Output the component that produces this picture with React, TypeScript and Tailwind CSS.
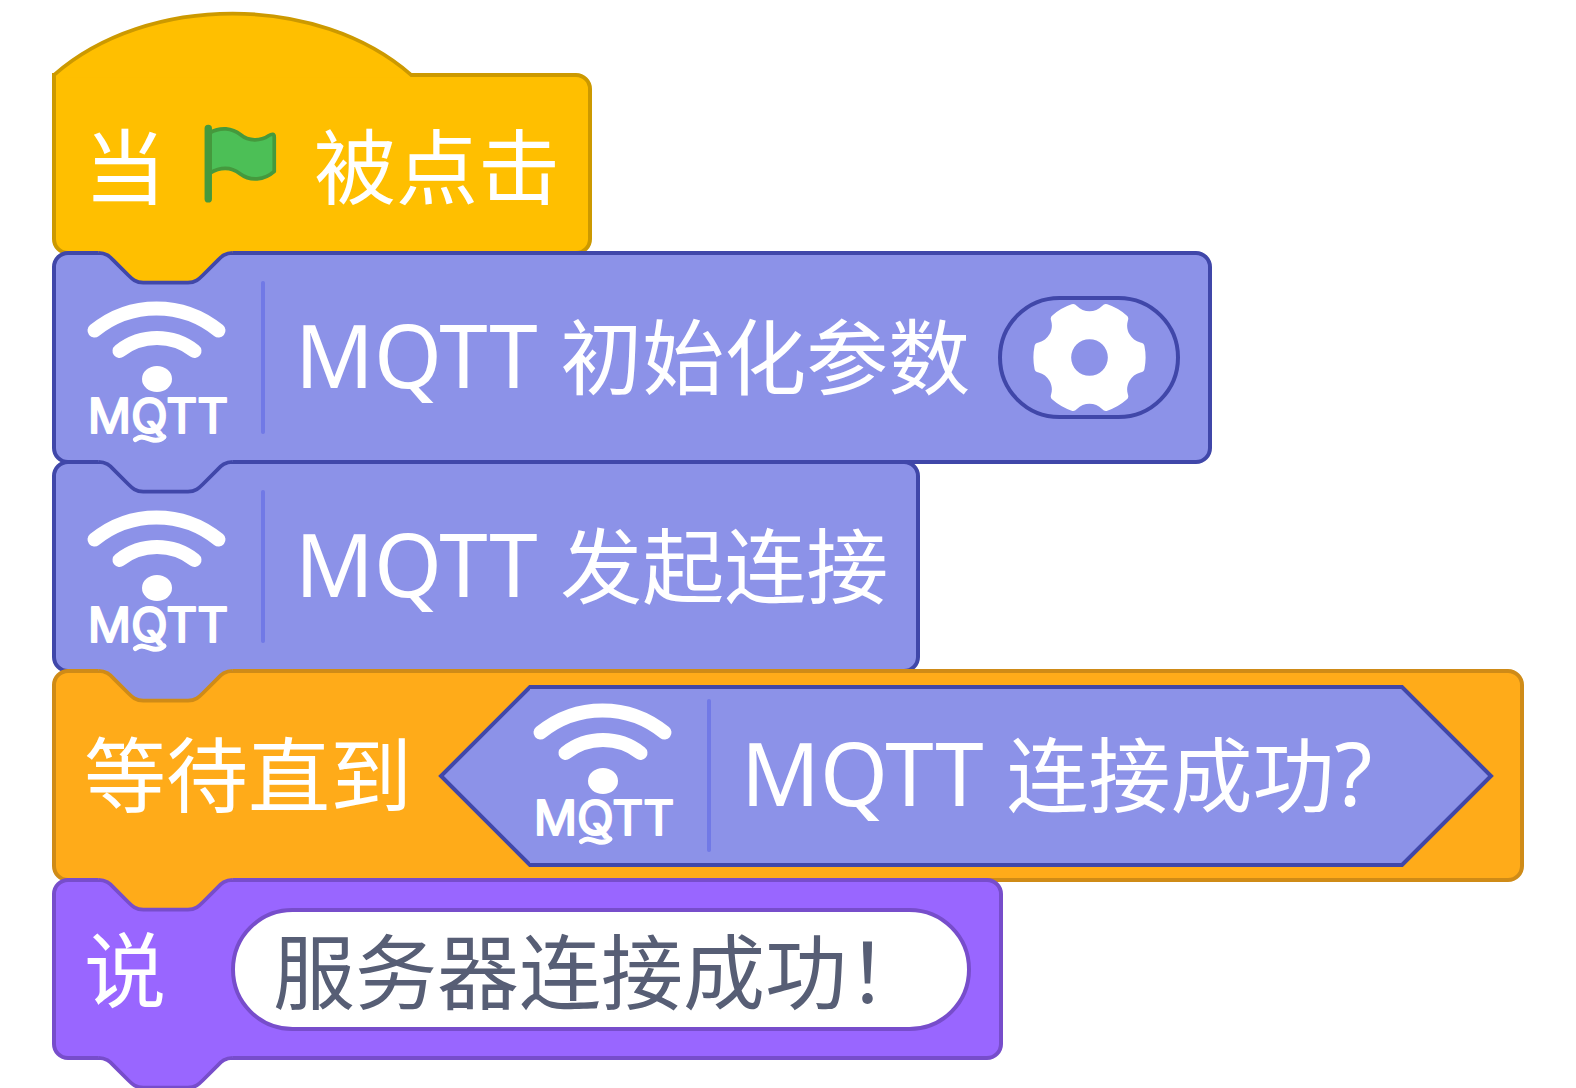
import type { ReactNode } from "react";

const NOTCH = "M12 0c2 0 3 1 4 2l4 4c1 1 2 2 4 2h12c2 0 3-1 4-2l4-4c1-1 2-2 4-2";

/* The connector between two stacked blocks. */
function Notch({ className }: { className: string }) {
  return (
    <svg viewBox="-0.5 -0.5 58 14.5" className={"absolute -left-1 h-[54px] w-[216px] " + className} aria-hidden="true">
      <path d={NOTCH + "V-0.5H12z"} stroke="none" />
      <path d={NOTCH} fill="none" />
    </svg>
  );
}

function Block({ className, children }: { className: string; children: ReactNode }) {
  return (
    <section className={"relative -mt-1 flex items-center rounded-[16px] border-4 px-7 " + className}>
      {children}
    </section>
  );
}

function Label({ className = "", children }: { className?: string; children: ReactNode }) {
  return <span className={"whitespace-pre text-[82px] leading-[88px] " + className}>{children}</span>;
}

function Latin({ children }: { children: ReactNode }) {
  return <span className="text-[87px] leading-[88px]">{children}</span>;
}

function MqttIcon({ className = "" }: { className?: string }) {
  return (
    <svg
      viewBox="0 0 149 150"
      className={"h-[150px] w-[149px] shrink-0 overflow-visible fill-white stroke-white " + className}
    >
      <g fill="none" strokeWidth="14" strokeLinecap="round">
        <path d="M10.500 31.5A98 98 0 0 1 134.500 31.5" />
        <path d="M35.500 52A61 61 0 0 1 110.500 52" />
        <path d="M51.500 140.500C58 136 62 139 67 140.500S77 141 80 138" strokeWidth="5" />
      </g>
      <ellipse cx="73" cy="80" rx="15" ry="13" stroke="none" />
      <text
        x="74"
        y="134"
        textAnchor="middle"
        strokeWidth="2"
        strokeLinejoin="round"
        fontFamily="Inter, sans-serif"
        fontSize="48"
      >
        MQTT
      </text>
    </svg>
  );
}

function Separator() {
  return <span className="mr-0.5 h-[153px] w-1 shrink-0 rounded-full bg-[#7179e6]" />;
}

function FlagIcon() {
  return (
    <svg viewBox="16 28 268 268" className="size-[90px] shrink-0" role="img" aria-label="绿旗">
      <path
        d="M60 69C92 51 126 54 152 75C176 95 211 94 235 78Q252 67 252 82V184C222 211 180 214 150 191C122 169 94 169 60 189z"
        fill="#4cbf56"
        stroke="#45993d"
        strokeWidth="11"
        strokeLinejoin="round"
      />
      <path d="M55.500 56V266" stroke="#45993d" strokeWidth="22" strokeLinecap="round" />
    </svg>
  );
}

/* One notch of the gear, followed by the outer edge of the next tooth; repeated every 60 degrees. */
const GEAR_POINTS = [
  [-46, -165], [-38, -156], [-28, -145], [-14, -140], [0, -140],
  [14, -140], [28, -145], [38, -156], [46, -165], [54, -161],
];

function gearPath() {
  let d = "";
  for (let k = 0; k < 6; k++) {
    const a = (k * Math.PI) / 3;
    const turn = (x: number, y: number) =>
      (x * Math.cos(a) - y * Math.sin(a)).toFixed(1) + " " + (x * Math.sin(a) + y * Math.cos(a)).toFixed(1);
    const p = GEAR_POINTS.map(([x, y]) => turn(x, y));
    const start = turn(-54, -161);
    d += k === 0 ? `M${start}` : `A169 169 0 0 1 ${start}`;
    d += `Q${p[0]} ${p[1]}C${p[2]} ${p[3]} ${p[4]}C${p[5]} ${p[6]} ${p[7]}Q${p[8]} ${p[9]}`;
  }
  return d + "A169 169 0 0 1 -54 -161zM-55.500 0a55.500 55.500 0 1 0 111 0a55.500 55.500 0 1 0 -111 0z";
}

function GearButton() {
  return (
    <button
      type="button"
      aria-label="设置"
      className="flex h-[123px] w-[182px] shrink-0 items-center justify-center rounded-full border-4 border-[#4047a9]"
    >
      <svg viewBox="-171 -171 342 342" className="size-[113px]">
        <path d={gearPath()} fill="#fff" fillRule="evenodd" />
      </svg>
    </button>
  );
}

/* The pointed end of a true/false block; the right end is the mirrored left one. */
function Point({ className = "" }: { className?: string }) {
  return (
    <svg
      viewBox="0 0 90 182"
      className={"h-[182px] w-[90px] shrink-0 overflow-visible fill-[#8c92e8] stroke-[#4047a9] " + className}
      aria-hidden="true"
    >
      <path d="M91 2H90L1 91L90 180H91" strokeWidth="4" />
    </svg>
  );
}

function Condition({ children }: { children: ReactNode }) {
  return (
    <div className="flex h-[182px]">
      <Point />
      <div className="flex items-center gap-7 border-y-4 border-[#4047a9] bg-[#8c92e8] pr-[30px]">{children}</div>
      <Point className="-scale-x-100" />
    </div>
  );
}

export default function App() {
  return (
    <main className="flex min-h-screen flex-col items-start overflow-hidden bg-white pl-[52px] pt-[77px] font-['Noto_Sans','Noto_Sans_CJK_SC',sans-serif] text-white">
      <Block className="min-h-[182px] gap-[29px] rounded-tl-none border-[#cc9900] bg-[#ffbf00]">
        <svg
          viewBox="-0.5 -18 116 29"
          className="absolute -left-1 -top-[69px] h-[108px] w-[432px]"
          aria-hidden="true"
        >
          <path d="M0 0c25-22 71-22 96 0V.7H.5V0z" fill="#ffbf00" />
          <path d="M0 1V0c25-22 71-22 96 0h2" fill="none" stroke="#cc9900" />
        </svg>
        <Label className="pt-1">当</Label>
        <FlagIcon />
        <Label className="pt-1">被点击</Label>
      </Block>

      <Block className="min-h-[213px] gap-7 border-[#4047a9] bg-[#8c92e8]">
        <Notch className="-top-1 fill-[#ffbf00] stroke-[#4047a9]" />
        <MqttIcon className="mt-8" />
        <Separator />
        <Label className="pb-1.5">
          <Latin>MQTT </Latin>初始化参数
        </Label>
        <GearButton />
      </Block>

      <Block className="min-h-[213px] gap-7 border-[#4047a9] bg-[#8c92e8]">
        <Notch className="-top-1 fill-[#8c92e8] stroke-[#4047a9]" />
        <MqttIcon className="mt-8" />
        <Separator />
        <Label className="pb-1.5">
          <Latin>MQTT </Latin>发起连接
        </Label>
      </Block>

      <Block className="min-h-[213px] gap-7 border-[#cf8b17] bg-[#ffab19]">
        <Notch className="-top-1 fill-[#8c92e8] stroke-[#cf8b17]" />
        <Label className="pb-1">等待直到</Label>
        <Condition>
          <MqttIcon />
          <Separator />
          <Label className="pb-1.5">
            <Latin>MQTT </Latin>连接成功<Latin>?</Latin>
          </Label>
        </Condition>
      </Block>

      <Block className="min-h-[182px] gap-[65px] border-[#774dcb] bg-[#9966ff]">
        <Notch className="-top-1 fill-[#ffab19] stroke-[#774dcb]" />
        <Notch className="top-[174px] fill-[#9966ff] stroke-[#774dcb]" />
        <label htmlFor="message" className="flex">
          <Label>说</Label>
        </label>
        <input
          id="message"
          type="text"
          defaultValue="服务器连接成功！"
          className="field-sizing-content h-[123px] rounded-full border-4 border-[#774dcb] bg-white px-[38px] pb-1 text-[82px] leading-[88px] text-[#575e75] outline-none"
        />
      </Block>
    </main>
  );
}
